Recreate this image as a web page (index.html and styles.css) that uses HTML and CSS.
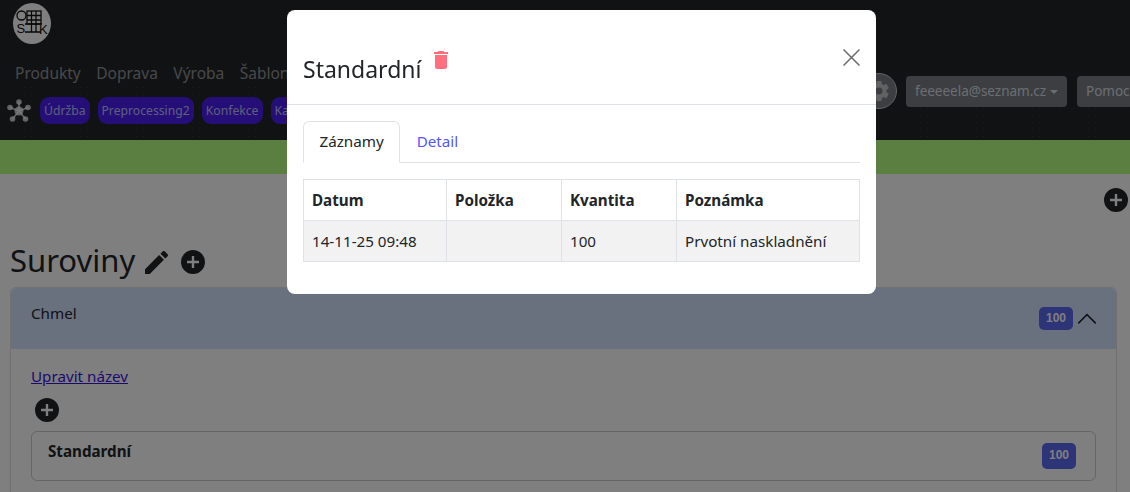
FILE: index.html
```html
<!DOCTYPE html>
<html lang="cs">
<head>
  <meta charset="UTF-8" />
  <title>Suroviny</title>
  <link rel="stylesheet" href="styles.css">
</head>
<body>

  <nav class="topbar">
    <div class="brand">
      <svg class="brand-logo" viewBox="0 0 38 41">
        <ellipse cx="19" cy="20.500" rx="19" ry="20.500" fill="#fff"/>
        <g fill="none" stroke="#111" stroke-width="1.300">
          <circle cx="8.500" cy="12.500" r="4.500"/>
          <rect x="14" y="8" width="14" height="13"/>
          <path d="M14 12.500h14M14 17h14M18.500 8v13M23 8v13M12 21h17M12 29h16M18.500 21v8M23 21v8"/>
        </g>
        <text class="logo-letter" x="3.500" y="30">S</text>
        <text class="logo-letter" x="26" y="31">K</text>
      </svg>
    </div>
    <ul class="main-menu">
      <li>Produkty</li>
      <li>Doprava</li>
      <li>Výroba</li>
      <li>Šablony</li>
    </ul>
    <div class="tag-row">
      <svg class="net-icon" viewBox="0 0 24 24">
        <g stroke="#fff" stroke-width="1.600" opacity=".75">
          <path d="M12 12 12 3M12 12 21 8.500M12 12 18.500 20M12 12 5.500 20M12 12 3 8.500"/>
        </g>
        <g fill="#fff" opacity=".75">
          <circle cx="12" cy="12" r="4.500"/><circle cx="12" cy="3" r="2.800"/><circle cx="21" cy="8.500" r="2.800"/>
          <circle cx="18.500" cy="20" r="2.800"/><circle cx="5.500" cy="20" r="2.800"/><circle cx="3" cy="8.500" r="2.800"/>
        </g>
      </svg>
      <a class="tag">Údržba</a>
      <a class="tag">Preprocessing2</a>
      <a class="tag">Konfekce</a>
      <a class="tag">Kategorie</a>
    </div>
    <div class="user-tools">
      <span class="gear-btn">
        <svg viewBox="0 0 24 24" width="24" height="24"><path fill="#c4c4c4" d="M12,15.5A3.5,3.5 0 0,1 8.5,12A3.5,3.5 0 0,1 12,8.5A3.5,3.5 0 0,1 15.5,12A3.5,3.5 0 0,1 12,15.5M19.43,12.97C19.47,12.65 19.5,12.33 19.5,12C19.5,11.67 19.47,11.34 19.43,11L21.54,9.37C21.73,9.22 21.78,8.95 21.66,8.73L19.66,5.27C19.54,5.05 19.27,4.96 19.05,5.05L16.56,6.05C16.04,5.66 15.5,5.32 14.87,5.07L14.5,2.42C14.46,2.18 14.25,2 14,2H10C9.75,2 9.54,2.18 9.5,2.42L9.13,5.07C8.5,5.32 7.96,5.66 7.44,6.05L4.95,5.05C4.73,4.96 4.46,5.05 4.34,5.27L2.34,8.73C2.21,8.95 2.27,9.22 2.46,9.37L4.57,11C4.53,11.34 4.5,11.67 4.5,12C4.5,12.33 4.53,12.65 4.57,12.97L2.46,14.63C2.27,14.78 2.21,15.05 2.34,15.27L4.34,18.73C4.46,18.95 4.73,19.03 4.95,18.95L7.44,17.94C7.96,18.34 8.5,18.68 9.13,18.93L9.5,21.58C9.54,21.82 9.75,22 10,22H14C14.25,22 14.46,21.82 14.5,21.58L14.87,18.93C15.5,18.67 16.04,18.34 16.56,17.94L19.05,18.95C19.27,19.03 19.54,18.95 19.66,18.73L21.66,15.27C21.78,15.05 21.73,14.78 21.54,14.63L19.43,12.97Z"/></svg>
      </span>
      <button class="top-btn email-btn">feeeeela@seznam.cz<i class="caret"></i></button>
      <button class="top-btn">Pomoc</button>
    </div>
  </nav>

  <div class="notice"></div>

  <main>
    <div class="page-tools">
      <svg class="plus-icon" viewBox="2 2 20 20"><use href="#plus"/></svg>
    </div>

    <h1 class="page-title">
      <span class="page-title-text">Suroviny</span>
      <svg class="pencil" viewBox="3 3 18 18"><path fill="#212529" d="M20.71,7.04C21.1,6.65 21.1,6 20.71,5.63L18.37,3.29C18,2.9 17.35,2.9 16.96,3.29L15.12,5.12L18.87,8.87M3,17.25V21H6.75L17.81,9.93L14.06,6.18L3,17.25Z"/></svg>
      <svg class="plus-icon" viewBox="2 2 20 20"><use href="#plus"/></svg>
    </h1>

    <section class="accordion">
      <header class="accordion-head">
        <span>Chmel</span>
        <span class="head-right">
          <span class="badge">100</span>
          <svg class="chevron" viewBox="0 0 16 16"><path fill="none" stroke="#212529" stroke-width="1.200" d="M1 11.500 8 4.500l7 7"/></svg>
        </span>
      </header>
      <div class="accordion-body">
        <a class="edit-link">Upravit název</a>
        <svg class="plus-icon inner-plus" viewBox="2 2 20 20"><use href="#plus"/></svg>
        <div class="stock-card">
          <strong>Standardní</strong>
          <span class="badge">100</span>
        </div>
      </div>
    </section>
  </main>

  <svg class="sprite">
    <defs>
      <path id="plus" fill="#212529" d="M17,13H13V17H11V13H7V11H11V7H13V11H17M12,2A10,10 0 0,0 2,12A10,10 0 0,0 12,22A10,10 0 0,0 22,12A10,10 0 0,0 12,2Z"/>
    </defs>
  </svg>

  <div class="backdrop"></div>

  <div class="modal">
    <div class="modal-head">
      <h2>Standardní</h2>
      <svg class="trash" viewBox="5 3 14 18"><path fill="#ff6f7d" d="M19,4H15.5L14.5,3H9.5L8.5,4H5V6H19M6,19A2,2 0 0,0 8,21H16A2,2 0 0,0 18,19V7H6V19Z"/></svg>
      <svg class="close" viewBox="0 0 16 16"><path fill="none" stroke="#6a6a6a" stroke-width="1.400" d="M.5.500l15 15M15.500.500l-15 15"/></svg>
    </div>
    <div class="modal-body">
      <ul class="tabs">
        <li class="tab active">Záznamy</li>
        <li class="tab">Detail</li>
      </ul>
      <table class="records">
        <thead>
          <tr><th class="col-date">Datum</th><th class="col-item">Položka</th><th class="col-qty">Kvantita</th><th>Poznámka</th></tr>
        </thead>
        <tbody>
          <tr><td>14-11-25 09:48</td><td></td><td>100</td><td>Prvotní naskladnění</td></tr>
        </tbody>
      </table>
    </div>
  </div>

</body>
</html>
```

FILE: styles.css
```css
* {
  box-sizing: border-box;
}

html, body {
  height: 100%;
  overflow: hidden;
}

body {
  margin: 0;
  font-family: 'Noto Sans', 'Open Sans', sans-serif;
  font-size: 15.200px;
  color: #212529;
  background: #fff;
}

.topbar {
  position: relative;
  height: 140px;
  background: #212529;
}

/* faint dotted texture over the lower part of the bar */
.topbar::after {
  content: "";
  position: absolute;
  left: 0;
  right: 0;
  top: 84px;
  bottom: 0;
  background-image: radial-gradient(rgba(255, 255, 255, 0.08) 0.6px, transparent 0.8px);
  background-size: 7px 7px;
  pointer-events: none;
}

.brand {
  height: 62px;
  padding: 3px 0 0 13px;
}

.brand-logo {
  display: block;
  width: 38px;
  height: 41px;
}

.logo-letter {
  font-family: 'Liberation Sans', sans-serif;
  font-size: 13px;
  fill: #111;
}

.main-menu {
  list-style: none;
  display: flex;
  gap: 15.500px;
  margin: 0;
  padding: 0 0 0 15px;
  height: 35px;
  line-height: 22px;
  color: rgba(255, 255, 255, 0.5);
  font-size: 15.500px;
}

.tag-row {
  display: flex;
  align-items: center;
  gap: 8px;
  padding-left: 7px;
}

.net-icon {
  width: 24px;
  height: 24px;
  margin-right: 1px;
}

.tag {
  height: 27px;
  line-height: 27px;
  padding: 0 4px;
  border-radius: 9px;
  background: #4b1df0;
  color: #b8c0f8;
  font-size: 12.200px;
  white-space: nowrap;
}

.user-tools {
  position: absolute;
  top: 73px;
  left: 861px;
  display: flex;
  align-items: center;
  gap: 9px;
}

.gear-btn {
  display: flex;
  align-items: center;
  justify-content: center;
  width: 36px;
  height: 36px;
  border: 1px solid #c4c4c4;
  border-radius: 50%;
  background: #787c84;
}

.top-btn {
  height: 31px;
  padding: 0 9px;
  border: 0;
  border-radius: 4px;
  background: #787c84;
  color: #d8dde2;
  font: inherit;
  font-size: 13.500px;
  white-space: nowrap;
}

.email-btn {
  width: 161px;
  margin-right: 1px;
}

.caret {
  display: inline-block;
  margin-left: 4px;
  vertical-align: 2px;
  border-top: 4px solid currentColor;
  border-left: 4px solid transparent;
  border-right: 4px solid transparent;
}

.notice {
  height: 34px;
  background: #b6fe80;
}

main {
  padding: 0 13px 0 10px;
}

.page-tools {
  display: flex;
  justify-content: flex-end;
  height: 51px;
  margin-right: -11px;
  padding-top: 14px;
}

.plus-icon {
  display: block;
  width: 24px;
  height: 24px;
}

.page-title {
  display: flex;
  align-items: center;
  height: 62px;
  margin: 0;
  padding-top: 12px;
  font-size: 31px;
  font-weight: 400;
}

.page-title-text {
  margin-bottom: 4px;
}

.pencil {
  width: 23px;
  height: 23px;
  margin: 0 13px 0 10px;
}

.accordion {
  height: 205px;
  border: 1px solid #dee2e6;
  border-bottom: 0;
  border-radius: 6px 6px 0 0;
}

.accordion-head {
  display: flex;
  justify-content: space-between;
  height: 61px;
  padding: 15px 20px;
  background: #d2e2ff;
  border-radius: 6px 6px 0 0;
  line-height: 20px;
}

.head-right {
  display: flex;
  align-items: center;
  height: 23px;
  margin-top: 4px;
  margin-right: -1px;
  gap: 4px;
}

.chevron {
  width: 20px;
  height: 20px;
}

.badge {
  width: 34px;
  height: 23px;
  line-height: 22px;
  text-align: center;
  border-radius: 5px;
  background: #5a68f0;
  color: #fff;
  font-family: 'Liberation Sans', sans-serif;
  font-size: 12px;
  font-weight: 700;
}

.accordion-body {
  padding: 15px 20px;
}

.edit-link {
  display: block;
  line-height: 24px;
  color: #3a14e0;
  text-decoration: underline;
}

.inner-plus {
  margin: 10px 0 9px 4px;
}

.stock-card {
  display: flex;
  justify-content: space-between;
  height: 50px;
  padding: 8px 16px;
  border: 1px solid #ccc;
  border-radius: 6px;
  line-height: 22px;
}

.stock-card .badge {
  height: 26px;
  line-height: 25px;
  margin: 3px 3px 0 0;
}

.sprite {
  display: none;
}

.backdrop {
  position: fixed;
  inset: 0;
  background: rgba(0, 0, 0, 0.5);
}

.modal {
  position: fixed;
  top: 10px;
  left: 287px;
  width: 589px;
  height: 284px;
  background: #fff;
  border-radius: 8px;
}

.modal-head {
  position: relative;
  display: flex;
  height: 95px;
  padding: 39px 16px 0;
  border-bottom: 1px solid #dee2e6;
}

.modal-head h2 {
  margin: 0;
  font-size: 23px;
  font-weight: 400;
  line-height: 40px;
}

.trash {
  width: 14px;
  height: 18px;
  margin: 2px 0 0 13px;
}

.close {
  position: absolute;
  top: 39px;
  right: 16px;
  width: 17px;
  height: 17px;
}

.modal-body {
  padding: 16px;
}

.tabs {
  list-style: none;
  display: flex;
  margin: 0 0 16px;
  padding: 0;
  height: 42px;
  border-bottom: 1px solid #dee2e6;
}

.tab {
  height: 42px;
  padding: 8px 15.500px;
  line-height: 22px;
  color: #5156ff;
  border: 1px solid transparent;
  border-radius: 6px 6px 0 0;
}

.tab.active {
  color: #212529;
  background: #fff;
  border-color: #dee2e6 #dee2e6 #fff;
}

.records {
  width: 557px;
  table-layout: fixed;
  border-collapse: collapse;
}

.records th,
.records td {
  height: 41px;
  padding: 8px;
  text-align: left;
  line-height: 24px;
  border: 1px solid #dee2e6;
}

.records th {
  font-weight: 700;
}

.records td {
  background: #f2f2f2;
}

.col-date {
  width: 143px;
}

.col-item,
.col-qty {
  width: 115px;
}
```
